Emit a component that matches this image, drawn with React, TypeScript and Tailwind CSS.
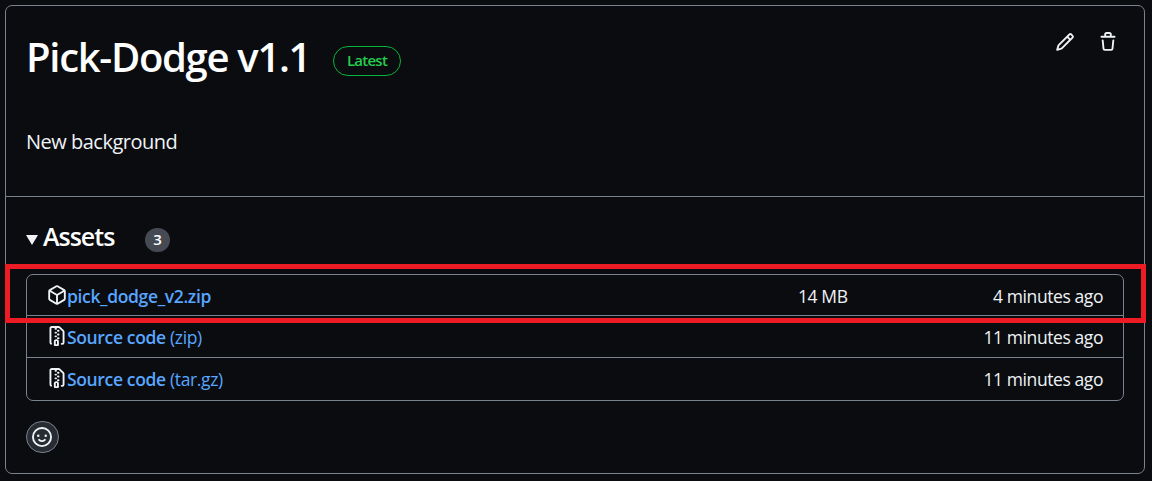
import type { ReactNode } from "react";

const paths = {
  pencil:
    "M11.013 1.427a1.75 1.75 0 0 1 2.474 0l1.086 1.086a1.75 1.75 0 0 1 0 2.474l-8.61 8.61c-.21.21-.47.364-.756.445l-3.251.93a.75.75 0 0 1-.927-.928l.929-3.25c.081-.286.235-.547.445-.758l8.61-8.61Zm.176 4.823L9.75 4.81l-6.286 6.287a.253.253 0 0 0-.064.108l-.558 1.953 1.953-.558a.253.253 0 0 0 .108-.064Zm1.238-3.763a.25.25 0 0 0-.354 0L10.811 3.75l1.439 1.44 1.263-1.263a.25.25 0 0 0 0-.354Z",
  trash:
    "M11 1.75V3h2.25a.75.75 0 0 1 0 1.5H2.75a.75.75 0 0 1 0-1.5H5V1.75C5 .784 5.784 0 6.75 0h2.5C10.216 0 11 .784 11 1.75ZM4.496 6.675l.66 6.6a.25.25 0 0 0 .249.225h5.19a.25.25 0 0 0 .249-.225l.66-6.6a.75.75 0 0 1 1.492.149l-.66 6.6A1.748 1.748 0 0 1 10.595 15h-5.19a1.75 1.75 0 0 1-1.741-1.575l-.66-6.6a.75.75 0 1 1 1.492-.15ZM6.5 1.75V3h3V1.75a.25.25 0 0 0-.25-.25h-2.5a.25.25 0 0 0-.25.25Z",
  package:
    "m8.878.392 5.25 3.045c.54.314.872.89.872 1.514v6.098a1.75 1.75 0 0 1-.872 1.514l-5.25 3.045a1.75 1.75 0 0 1-1.756 0l-5.25-3.045A1.75 1.75 0 0 1 1 11.049V4.951c0-.624.332-1.201.872-1.514L7.122.392a1.75 1.75 0 0 1 1.756 0ZM7.875 1.69l-4.63 2.685L8 7.133l4.755-2.758-4.63-2.685a.248.248 0 0 0-.25 0ZM2.5 5.677v5.372c0 .09.047.171.125.216l4.625 2.683V8.432Zm6.25 8.271 4.625-2.683a.25.25 0 0 0 .125-.216V5.677L8.75 8.432Z",
  zip: "M3.5 1.75v11.5c0 .09.048.173.126.217a.75.75 0 0 1-.752 1.298A1.748 1.748 0 0 1 2 13.25V1.75C2 .784 2.784 0 3.75 0h5.586c.464 0 .909.185 1.237.513l2.914 2.914c.329.328.513.773.513 1.237v8.586A1.75 1.75 0 0 1 12.25 15h-.5a.75.75 0 0 1 0-1.5h.5a.25.25 0 0 0 .25-.25V4.664a.25.25 0 0 0-.073-.177L9.513 1.573a.25.25 0 0 0-.177-.073H7.25a.75.75 0 0 1 0 1.5h-.5a.75.75 0 0 1 0-1.5h-3a.25.25 0 0 0-.25.25Zm3.75 8.75h.5c.966 0 1.75.784 1.75 1.75v3a.75.75 0 0 1-.75.75h-2.5a.75.75 0 0 1-.75-.75v-3c0-.966.784-1.75 1.75-1.75ZM6 5.25a.75.75 0 0 1 .75-.75h.5a.75.75 0 0 1 0 1.5h-.5A.75.75 0 0 1 6 5.25Zm.75 2.25h.5a.75.75 0 0 1 0 1.5h-.5a.75.75 0 0 1 0-1.5Zm1.25-.75A.75.75 0 0 1 8.75 6h.5a.75.75 0 0 1 0 1.5h-.5A.75.75 0 0 1 8 6.75ZM8.75 3h.5a.75.75 0 0 1 0 1.5h-.5a.75.75 0 0 1 0-1.5ZM8 9.75A.75.75 0 0 1 8.75 9h.5a.75.75 0 0 1 0 1.5h-.5A.75.75 0 0 1 8 9.75Zm-1 2.5v2.25h1v-2.25a.25.25 0 0 0-.25-.25h-.5a.25.25 0 0 0-.25.25Z",
  smiley:
    "M8 0a8 8 0 1 1 0 16A8 8 0 0 1 8 0ZM1.5 8a6.5 6.5 0 1 0 13 0 6.5 6.5 0 0 0-13 0Zm3.82 1.636a.75.75 0 0 1 1.038.175l.007.009c.103.118.22.222.35.31.264.178.683.37 1.285.37.602 0 1.02-.192 1.285-.371.13-.088.247-.192.35-.31l.007-.008a.75.75 0 0 1 1.222.87c-.06.085-.127.165-.2.239-.16.166-.338.316-.53.445-.63.418-1.37.638-2.127.629-.946 0-1.652-.308-2.126-.63a3.331 3.331 0 0 1-.715-.657.75.75 0 0 1 .183-1.068ZM12 7a1 1 0 1 1-2 0 1 1 0 0 1 2 0ZM5 8a1 1 0 1 1 0-2 1 1 0 0 1 0 2Z",
};

function Icon({ name, className = "" }: { name: keyof typeof paths; className?: string }) {
  return (
    <svg viewBox="0 0 16 16" className={`size-5 shrink-0 fill-current ${className}`} aria-hidden="true">
      <path d={paths[name]} />
    </svg>
  );
}

function Asset({
  icon,
  size,
  time,
  className,
  children,
}: {
  icon: keyof typeof paths;
  size?: string;
  time: string;
  className: string;
  children: ReactNode;
}) {
  return (
    <li className={`flex items-start px-5 pt-2 text-[17.5px] leading-[26px] ${className}`}>
      <Icon name={icon} className="mt-[2px]" />
      <a className="w-[731px] whitespace-nowrap tracking-[-0.35px] text-[#58a6ff]">{children}</a>
      <span className="tracking-[-0.4px]">{size}</span>
      <span className="ml-auto tracking-[-0.42px]">{time}</span>
    </li>
  );
}

export default function App() {
  return (
    <div className="h-[481px] w-[1152px] bg-[#0a0c10] p-[5px] font-['Open_Sans','Noto_Sans',sans-serif] text-[#f0f3f6]">
      <section className="relative flex h-[469px] w-[1140px] flex-col rounded-[7px] border border-[#7a828e]">
        <header className="flex h-[106px] items-start pl-5 pr-[26px]">
          <h1 className="mt-[23px] w-[283px] text-[40px] leading-[55px] font-semibold tracking-[-1.3px] whitespace-nowrap text-white">
            Pick-Dodge v1.1
          </h1>
          <span className="mt-10 ml-6 flex h-[30px] w-[68px] items-center justify-center rounded-full border border-[#09b43a] pb-[2px] text-[15px] font-semibold tracking-[-0.75px] text-[#26cd4d]">
            Latest
          </span>
          <div className="mt-[26px] ml-auto flex gap-[23px]">
            <Icon name="pencil" />
            <Icon name="trash" />
          </div>
        </header>
        <p className="h-[84px] pt-4 pl-5 text-[20px] leading-[27px] tracking-[-0.5px]">New background</p>
        <div className="border-t border-[#7a828e] px-5">
          <div className="flex h-[77px] items-center">
            <svg viewBox="0 0 12 10" className="mt-2 h-[10px] w-3 fill-current">
              <path d="M0 0h12L6 10z" />
            </svg>
            <h2 className="mt-[2px] ml-[5px] w-[72px] text-[25px] font-semibold tracking-[-1px] text-white">Assets</h2>
            <span className="mt-2 ml-[30px] flex h-6 w-[25px] items-center justify-center rounded-full bg-[#464b53] text-[15px] font-semibold text-white">
              3
            </span>
          </div>
          <ul className="flex h-[127px] flex-col rounded-[7px] border border-[#7a828e]">
            <Asset icon="package" size="14 MB" time="4 minutes ago" className="h-10">
              <span className="font-semibold">pick_dodge_v2.zip</span>
            </Asset>
            <Asset icon="zip" time="11 minutes ago" className="h-[42px] border-t border-[#7a828e]">
              <span className="font-semibold">Source code</span> (zip)
            </Asset>
            <Asset icon="zip" time="11 minutes ago" className="h-[43px] border-t border-[#7a828e]">
              <span className="font-semibold">Source code</span> (tar.gz)
            </Asset>
          </ul>
          <button className="mt-5 flex h-8 w-[33px] items-center justify-center rounded-full border border-[#7a828e] bg-[#272b33] pr-px">
            <Icon name="smiley" />
          </button>
        </div>
        <div className="pointer-events-none absolute top-[258px] left-[-1px] h-[59px] w-[1141px] border-[5px] border-[#ed1c24]" />
      </section>
    </div>
  );
}
